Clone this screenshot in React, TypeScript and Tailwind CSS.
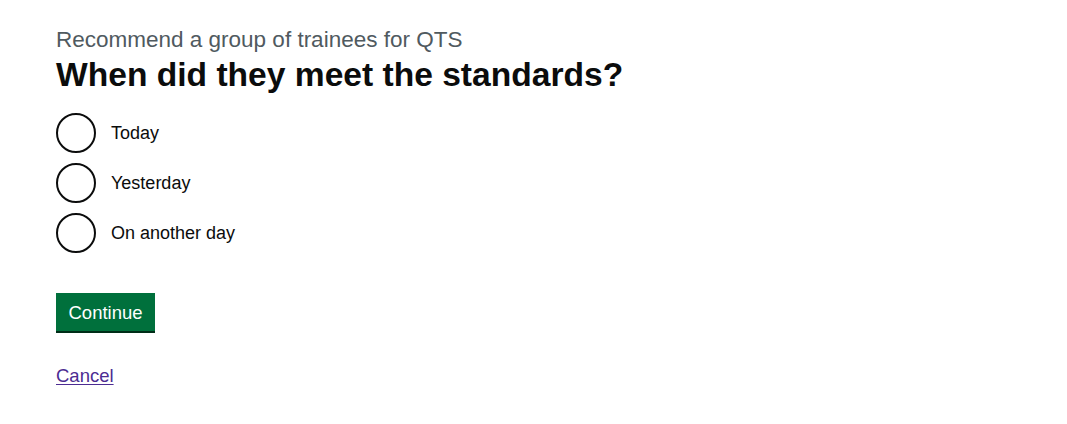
import React from "react";

const options = ["Today", "Yesterday", "On another day"];

function Radio({ label }: { label: string }) {
  return (
    <label className="flex items-center h-[40px] cursor-pointer">
      <span className="block w-[40px] h-[40px] rounded-full border-2 border-[#0b0c0c] bg-white shrink-0" />
      <span className="pl-[15px] text-[18px] leading-[25px] text-[#0b0c0c]">{label}</span>
    </label>
  );
}

export default function App() {
  return (
    <div className="min-h-screen bg-white font-['Liberation_Sans',Arial,sans-serif] text-[#0b0c0c]">
      <main className="px-[56px] pt-[25px]">
        <span className="block text-[22.5px] leading-[30px] text-[#505a5f]">
          Recommend a group of trainees for QTS
        </span>
        <h1 className="text-[33.6px] leading-[40px] font-bold mb-[18px]">When did they meet the standards?</h1>

        <div className="flex flex-col gap-[10px]">
          {options.map((o) => (
            <Radio key={o} label={o} />
          ))}
        </div>

        <button className="mt-[40px] block bg-[#00703c] text-white text-[18.5px] leading-[19px] px-[12.5px] pt-[10px] pb-[9px] shadow-[0_2px_0_#002d18] mb-[32px]">
          Continue
        </button>

        <a href="#" className="text-[18.5px] leading-[25px] text-[#4c2c92] underline underline-offset-[2px]">
          Cancel
        </a>
      </main>
    </div>
  );
}
